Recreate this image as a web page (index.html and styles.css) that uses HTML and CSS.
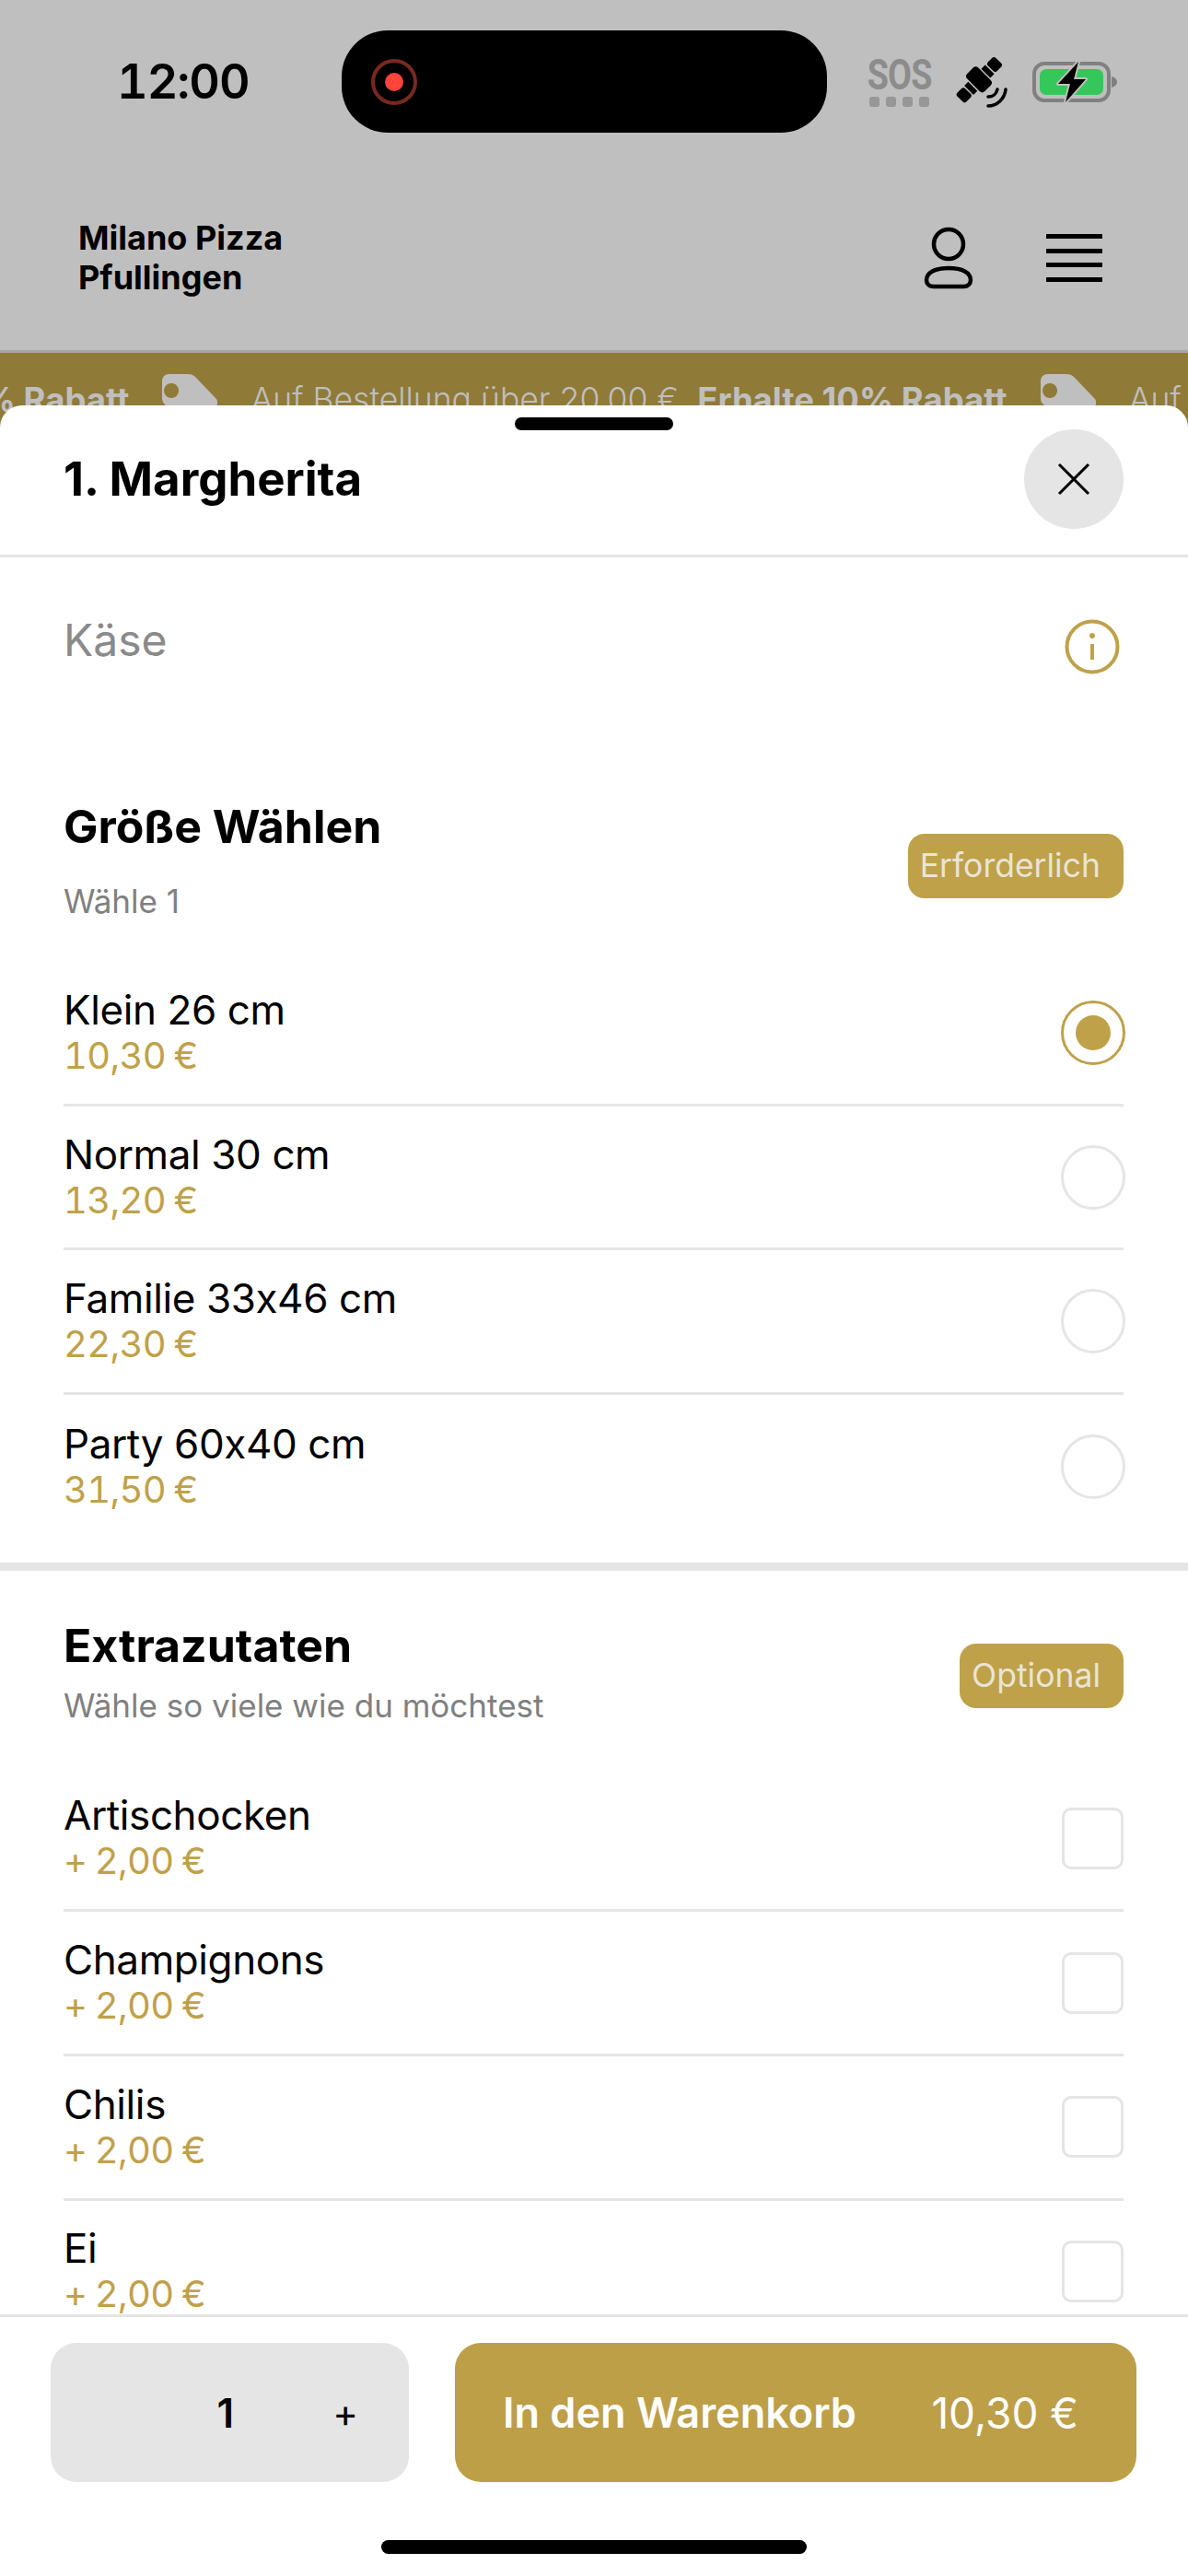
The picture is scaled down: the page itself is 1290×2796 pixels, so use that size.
FILE: index.html
```html
<!DOCTYPE html>
<html lang="de">
<head>
    <meta charset="UTF-8" />
    <meta name="viewport" content="width=device-width, initial-scale=1.0" />
    <title>Milano Pizza Pfullingen - 1. Margherita</title>
    <link rel="stylesheet" href="styles.css">
</head>
<body>
    <div class="phone">
        <!-- STATUS BAR -->
        <div class="status-bar">
            <span class="time">12:00</span>
            <div class="island"><span class="rec"><span class="rec-dot"></span></span></div>
            <div class="status-icons">
                <div class="sos"><span class="sos-text">SOS</span><span class="sos-dots"><i></i><i></i><i></i><i></i></span></div>
                <svg class="satellite" width="60" height="58" viewBox="0 0 60 58">
                    <g transform="rotate(-45 28 27)" fill="#000">
                        <rect x="-1" y="20" width="12" height="14" rx="3"/>
                        <rect x="12.5" y="20" width="6" height="14"/>
                        <rect x="20" y="13" width="17" height="27" rx="4"/>
                        <rect x="38.5" y="20" width="6" height="14"/>
                        <rect x="46" y="20" width="12" height="14" rx="3"/>
                    </g>
                    <path d="M38 45c5 0 9-3 10-8M38 55c10 0 18-8 19-18" fill="none" stroke="#000" stroke-width="3.5" stroke-linecap="round"/>
                </svg>
                <svg class="battery" width="94" height="46" viewBox="0 0 94 46">
                    <rect x="2" y="3" width="81" height="40" rx="11" fill="none" stroke="#808080" stroke-width="4"/>
                    <rect x="8" y="9" width="69" height="28" rx="7" fill="#34c759"/>
                    <path d="M86 17c4 1 6 3 6 6s-2 5-6 6z" fill="#808080"/>
                    <path d="M50 1 28 25h13l-5 20 22-25H45z" fill="#000" stroke="#bfbfbf" stroke-width="4" stroke-linejoin="round" paint-order="stroke"/>
                </svg>
            </div>
        </div>

        <!-- SHOP HEADER -->
        <div class="shop-header">
            <div class="shop-name">Milano Pizza<br>Pfullingen</div>
            <div class="shop-actions">
                <svg width="54" height="68" viewBox="0 0 54 68" fill="none" stroke="#000" stroke-width="4.5">
                    <circle cx="27" cy="19" r="16"/>
                    <path d="M11 65h32c5 0 8-3 8-7 0-8-9-13-24-13S3 50 3 58c0 4 3 7 8 7z"/>
                </svg>
                <div class="menu-icon"><i></i><i></i><i></i><i></i></div>
            </div>
        </div>

        <!-- PROMO BANNER -->
        <div class="promo">
            <div class="promo-track">
                <b>Erhalte 10% Rabatt</b>
                <svg class="tag" width="60" height="60" viewBox="0 0 60 60"><path d="M8 0h20c3 0 6 1 8 3l22 23c3 3 3 7 0 10L37 57c-3 3-7 3-10 0L3 33c-2-2-3-4-3-7V8c0-5 3-8 8-8zm2 10a8 8 0 1 0 .1 0z" fill="#bfbfbf" fill-rule="evenodd"/></svg>
                <span>Auf Bestellung über 20,00 €</span>
                <b>Erhalte 10% Rabatt</b>
                <svg class="tag" width="60" height="60" viewBox="0 0 60 60"><path d="M8 0h20c3 0 6 1 8 3l22 23c3 3 3 7 0 10L37 57c-3 3-7 3-10 0L3 33c-2-2-3-4-3-7V8c0-5 3-8 8-8zm2 10a8 8 0 1 0 .1 0z" fill="#bfbfbf" fill-rule="evenodd"/></svg>
                <span>Auf Bestellung über 20,00 €</span>
            </div>
        </div>

        <!-- PRODUCT SHEET -->
        <div class="sheet">
            <div class="handle"></div>
            <div class="sheet-head">
                <h1>1. Margherita</h1>
                <button class="close">
                    <svg width="36" height="36" viewBox="0 0 36 36" stroke="#000" stroke-width="3"><path d="M2 2l32 32M34 2L2 34"/></svg>
                </button>
            </div>

            <div class="sheet-body">
                <div class="description">
                    <span>Käse</span>
                    <svg width="60" height="60" viewBox="0 0 60 60" fill="none" stroke="#bfa14a">
                        <circle cx="30" cy="30" r="27.5" stroke-width="4"/>
                        <path d="M30 27v17" stroke-width="4"/>
                        <circle cx="30" cy="18" r="3" fill="#bfa14a" stroke="none"/>
                    </svg>
                </div>

                <div class="group sizes">
                    <div class="group-head">
                        <div>
                            <h2>Größe Wählen</h2>
                            <p class="hint">Wähle 1</p>
                        </div>
                        <span class="badge">Erforderlich</span>
                    </div>
                    <div class="option"><div><div class="name">Klein 26 cm</div><div class="price">10,30 €</div></div><span class="radio checked"></span></div>
                    <div class="option"><div><div class="name">Normal 30 cm</div><div class="price">13,20 €</div></div><span class="radio"></span></div>
                    <div class="option"><div><div class="name">Familie 33x46 cm</div><div class="price">22,30 €</div></div><span class="radio"></span></div>
                    <div class="option"><div><div class="name">Party 60x40 cm</div><div class="price">31,50 €</div></div><span class="radio"></span></div>
                </div>

                <div class="group extras">
                    <div class="group-head">
                        <div>
                            <h2>Extrazutaten</h2>
                            <p class="hint">Wähle so viele wie du möchtest</p>
                        </div>
                        <span class="badge">Optional</span>
                    </div>
                    <div class="option"><div><div class="name">Artischocken</div><div class="price">+ 2,00 €</div></div><span class="check"></span></div>
                    <div class="option"><div><div class="name">Champignons</div><div class="price">+ 2,00 €</div></div><span class="check"></span></div>
                    <div class="option"><div><div class="name">Chilis</div><div class="price">+ 2,00 €</div></div><span class="check"></span></div>
                    <div class="option"><div><div class="name">Ei</div><div class="price">+ 2,00 €</div></div><span class="check"></span></div>
                </div>
            </div>

            <div class="sheet-foot">
                <div class="actions">
                    <div class="qty"><span class="qty-num">1</span><span class="qty-plus">+</span></div>
                    <button class="add"><b>In den Warenkorb</b><span>10,30 €</span></button>
                </div>
                <div class="home-bar"></div>
            </div>
        </div>
    </div>
</body>
</html>
```

FILE: styles.css
```css
* {
    box-sizing: border-box;
}
body {
    margin: 0;
    background: #fff;
    font-family: Inter, "Liberation Sans", sans-serif;
    font-feature-settings: "calt" 0;
}
.phone {
    position: relative;
    width: 1290px;
    height: 2796px;
    overflow: hidden;
    background: #bfbfbf;
}

/* Status bar */
.status-bar {
    display: flex;
    align-items: center;
    height: 177px;
    padding-left: 127px;
}
.time {
    width: 244px;
    font-size: 52px;
    font-weight: 600;
    letter-spacing: -1px;
    font-variant-numeric: tabular-nums;
    color: #000;
}
.island {
    display: flex;
    align-items: center;
    width: 527px;
    height: 111px;
    padding-left: 32px;
    border-radius: 50px;
    background: #000;
}
.rec {
    display: flex;
    align-items: center;
    justify-content: center;
    width: 50px;
    height: 50px;
    border: 4px solid #78291f;
    border-radius: 50%;
}
.rec-dot {
    width: 20px;
    height: 20px;
    border-radius: 50%;
    background: #ff453a;
}
.status-icons {
    display: flex;
    align-items: center;
    margin-left: 44px;
}
.sos {
    display: flex;
    flex-direction: column;
    align-items: center;
    width: 69px;
}
.sos-text {
    font-family: Roboto, sans-serif;
    font-size: 47px;
    line-height: 40px;
    font-weight: 700;
    letter-spacing: -1px;
    color: #8c8c8c;
    transform: scaleX(0.8);
}
.sos-dots {
    display: flex;
    gap: 7px;
    margin-top: 4px;
}
.sos-dots i {
    width: 11px;
    height: 11px;
    border-radius: 3px;
    background: #979797;
}
.satellite {
    margin-left: 24px;
}
.battery {
    margin-left: 26px;
}

/* Shop header */
.shop-header {
    display: flex;
    align-items: center;
    justify-content: space-between;
    height: 206px;
    padding: 3px 93px 0 85px;
    border-bottom: 3px solid #a9a69d;
}
.shop-name {
    font-size: 36px;
    line-height: 43px;
    font-weight: 700;
    color: #000;
}
.shop-actions {
    display: flex;
    align-items: center;
    gap: 79px;
}
.menu-icon {
    display: flex;
    flex-direction: column;
    gap: 10.5px;
    width: 61px;
}
.menu-icon i {
    height: 5px;
    background: #000;
}

/* Promo banner */
.promo {
    height: 117px;
    overflow: hidden;
    background: #907a38;
}
.promo-track {
    display: flex;
    align-items: flex-start;
    margin-left: -196px;
    padding-top: 23px;
    white-space: nowrap;
    font-size: 36px;
    line-height: 44px;
    color: #bfbfbf;
}
.promo-track b,
.promo-track span {
    flex: none;
    margin-top: 6px;
}
.promo-track b {
    font-size: 36.5px;
    font-weight: 700;
}
.promo-track span {
    margin-right: 20px;
    font-size: 35.5px;
    font-weight: 300;
}
.tag {
    flex: none;
    margin: 0 36px;
}

/* Sheet */
.sheet {
    position: absolute;
    left: 0;
    right: 0;
    top: 440px;
    bottom: 0;
    display: flex;
    flex-direction: column;
    border-radius: 24px 24px 0 0;
    background: #fff;
}
.handle {
    position: absolute;
    left: 559px;
    top: 13px;
    width: 172px;
    height: 14px;
    border-radius: 7px;
    background: #000;
}
.sheet-head {
    display: flex;
    align-items: center;
    justify-content: space-between;
    flex: none;
    height: 165px;
    padding: 27px 70px 30px;
    border-bottom: 3px solid #e5e5e5;
}
h1 {
    margin: 0 0 0 -1px;
    font-size: 51px;
    font-weight: 700;
    color: #000;
}
.close {
    display: flex;
    align-items: center;
    justify-content: center;
    width: 108px;
    height: 108px;
    padding: 0;
    border: none;
    border-radius: 50%;
    background: #e5e5e5;
}
.sheet-body {
    flex: 1;
    min-height: 0;
    overflow: hidden;
}
.description {
    display: flex;
    justify-content: space-between;
    height: 232px;
    padding: 60px 74px 0 69px;
    font-size: 48px;
    font-weight: 400;
    color: #8a8a8a;
}
.description span {
    line-height: 60px;
}
.description svg {
    margin-top: 7px;
}
.group-head {
    display: flex;
    align-items: center;
    justify-content: space-between;
}
.sizes {
    height: 868px;
    padding: 0 70px 0 69px;
    border-bottom: 9px solid #e5e5e5;
}
.sizes .group-head {
    height: 207px;
}
.sizes h2 {
    margin-top: -15px;
}
.sizes .hint {
    margin-top: 29px;
}
.sizes .badge {
    margin-top: -2px;
}
.extras {
    padding: 0 70px 0 69px;
}
.extras .group-head {
    height: 213.5px;
    padding-top: 14px;
}
.extras h2 {
    margin-top: -9px;
}
.extras .hint {
    margin-top: 13px;
}
h2 {
    margin: 0;
    font-size: 50px;
    line-height: 60px;
    font-weight: 700;
    color: #000;
}
.hint {
    margin: 6px 0 0;
    font-size: 35px;
    line-height: 44px;
    font-weight: 400;
    color: #808080;
}
.badge {
    padding: 0 25px 0 13px;
    height: 70px;
    line-height: 70px;
    border-radius: 18px;
    background: #bfa14a;
    font-size: 35.5px;
    font-weight: 400;
    color: #e9e5d6;
}
.option {
    display: flex;
    align-items: center;
    justify-content: space-between;
    height: 156.7px;
    border-bottom: 3px solid #e5e5e5;
}
.sizes .option:last-child {
    border-bottom: none;
}
.name {
    font-size: 44px;
    line-height: 50px;
    letter-spacing: -0.4px;
    color: #000;
}
.price {
    font-size: 40px;
    line-height: 50px;
    font-weight: 400;
    font-variant-numeric: tabular-nums;
    letter-spacing: -0.7px;
    word-spacing: -1.5px;
    color: #bfa14a;
}
.radio {
    position: relative;
    width: 70px;
    height: 70px;
    margin-right: -2px;
    border: 3px solid #e5e5e5;
    border-radius: 50%;
}
.radio.checked {
    display: flex;
    align-items: center;
    justify-content: center;
    border-color: #bfa14a;
}
.radio.checked::after {
    content: "";
    width: 38px;
    height: 38px;
    border-radius: 50%;
    background: #bfa14a;
}
.check {
    width: 67px;
    height: 67px;
    border: 3px solid #e5e5e5;
    border-radius: 10px;
}

/* Footer */
.sheet-foot {
    flex: none;
    border-top: 3px solid #e5e5e5;
    padding-top: 28px;
    background: #fff;
}
.actions {
    display: flex;
    gap: 50px;
    padding: 0 56px 0 55px;
}
.qty {
    display: flex;
    align-items: center;
    justify-content: flex-end;
    flex: none;
    width: 389px;
    height: 151px;
    padding-right: 55px;
    border-radius: 28px;
    background: #e5e5e5;
    color: #000;
}
.qty-num {
    margin-right: 107px;
    font-size: 44px;
    font-weight: 600;
}
.qty-plus {
    font-size: 42px;
    font-weight: 400;
}
.add {
    display: flex;
    align-items: center;
    justify-content: space-between;
    flex: 1;
    height: 151px;
    padding: 0 63px 0 52px;
    border: none;
    border-radius: 28px;
    background: #bd9f48;
    font-family: inherit;
    font-size: 46px;
    color: #fff;
}
.add b {
    font-size: 45px;
    font-weight: 600;
}
.add span {
    font-weight: 400;
}
.home-bar {
    width: 462px;
    height: 15px;
    margin: 63px auto 24px;
    border-radius: 8px;
    background: #000;
}
```
